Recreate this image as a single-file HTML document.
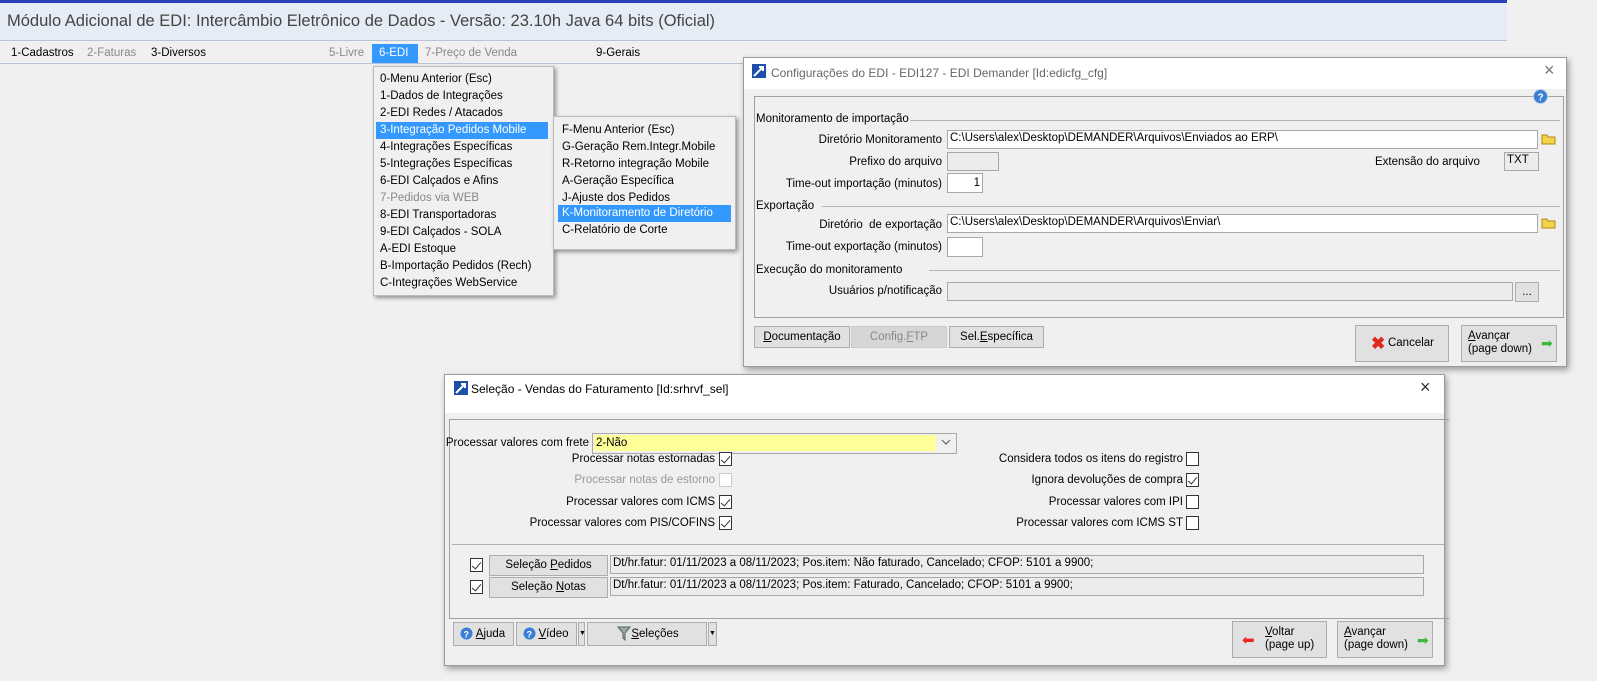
<!DOCTYPE html>
<html><head><meta charset="utf-8"><style>
*{margin:0;padding:0;box-sizing:border-box}
body{width:1597px;height:681px;background:#f0f0f0;font-family:"Liberation Sans",sans-serif;font-size:11.5px;color:#000;position:relative;overflow:hidden}
.a{position:absolute;white-space:nowrap}
.r{text-align:right}
.inp{position:absolute;background:#fff;border:1px solid #a8a8a8;padding:1px 2px;font-size:11.5px;white-space:nowrap}
.btn{position:absolute;background:#e1e1e1;border:1px solid #adadad;text-align:center;font-size:11.5px}
.cb{position:absolute;width:13px;height:14px;background:#fff;border:1px solid #333}
.cb.k::after{content:"";position:absolute;left:3px;top:1px;width:4px;height:8px;border:solid #333;border-width:0 1px 1px 0;transform:rotate(40deg)}
.mi{position:absolute;height:17px;line-height:17px;padding-left:4px;white-space:nowrap}
.hl{background:#3399ff;color:#fff}
.win{position:absolute;background:#f0f0f0;border:1px solid #9a9a9a;box-shadow:2px 3px 6px rgba(0,0,0,.35)}
.tt{position:absolute;left:0;right:0;top:0;background:#fff}
u{text-decoration:underline}
</style></head><body>
<!-- header -->
<div class="a" style="left:0;top:0;width:1507px;height:3px;background:#2a3fb8"></div>
<div class="a" style="left:0;top:3px;width:1507px;height:38px;background:#e6ecf5;border-bottom:1px solid #b8c4d4"></div>
<div class="a" style="left:7px;top:12px;font-size:16.5px;color:#444">Módulo Adicional de EDI: Intercâmbio Eletrônico de Dados - Versão: 23.10h Java 64 bits (Oficial)</div>
<div class="a" style="left:0;top:42px;width:1507px;height:22px;background:#f0f0f0;border-bottom:1px solid #b8c4d4"></div>
<div class="a" style="left:11px;top:47px">1-Cadastros</div>
<div class="a" style="left:87px;top:47px;color:#888">2-Faturas</div>
<div class="a" style="left:151px;top:47px">3-Diversos</div>
<div class="a" style="left:329px;top:47px;color:#888">5-Livre</div>
<div class="a" style="left:372px;top:44px;width:46px;height:19px;background:#3399ff;color:#fff;padding:3px 0 0 7px">6-EDI</div>
<div class="a" style="left:425px;top:47px;color:#888">7-Preço de Venda</div>
<div class="a" style="left:596px;top:47px">9-Gerais</div>

<!-- menu -->
<div class="a" style="left:373px;top:66px;width:181px;height:230px;background:#f0f0f0;border:1px solid #bbb;box-shadow:2px 2px 4px rgba(0,0,0,.4)"></div>
<div class="mi" style="left:376px;top:71px">0-Menu Anterior (Esc)</div>
<div class="mi" style="left:376px;top:88px">1-Dados de Integrações</div>
<div class="mi" style="left:376px;top:105px">2-EDI Redes / Atacados</div>
<div class="mi hl" style="left:376px;top:122px;width:172px">3-Integração Pedidos Mobile</div>
<div class="mi" style="left:376px;top:139px">4-Integrações Específicas</div>
<div class="mi" style="left:376px;top:156px">5-Integrações Específicas</div>
<div class="mi" style="left:376px;top:173px">6-EDI Calçados e Afins</div>
<div class="mi" style="left:376px;top:190px;color:#888">7-Pedidos via WEB</div>
<div class="mi" style="left:376px;top:207px">8-EDI Transportadoras</div>
<div class="mi" style="left:376px;top:224px">9-EDI Calçados - SOLA</div>
<div class="mi" style="left:376px;top:241px">A-EDI Estoque</div>
<div class="mi" style="left:376px;top:258px">B-Importação Pedidos (Rech)</div>
<div class="mi" style="left:376px;top:275px">C-Integrações WebService</div>

<div class="a" style="left:553px;top:116px;width:183px;height:134px;background:#f0f0f0;border:1px solid #bbb;box-shadow:2px 2px 4px rgba(0,0,0,.4)"></div>
<div class="mi" style="left:558px;top:122px">F-Menu Anterior (Esc)</div>
<div class="mi" style="left:558px;top:139px">G-Geração Rem.Integr.Mobile</div>
<div class="mi" style="left:558px;top:156px">R-Retorno integração Mobile</div>
<div class="mi" style="left:558px;top:173px">A-Geração Específica</div>
<div class="mi" style="left:558px;top:190px">J-Ajuste dos Pedidos</div>
<div class="mi hl" style="left:558px;top:205px;width:173px">K-Monitoramento de Diretório</div>
<div class="mi" style="left:558px;top:222px">C-Relatório de Corte</div>

<!-- config window -->
<div class="win" style="left:743px;top:57px;width:824px;height:310px">
 <div class="tt" style="height:31px"></div>
</div>
<svg class="a" style="left:752px;top:64px" width="14" height="14"><rect width="14" height="14" fill="#1c4fa8"/><path d="M2 12 L11 3 M7 3 H11 V7" stroke="#fff" stroke-width="2" fill="none"/></svg>
<div class="a" style="left:771px;top:66px;font-size:12px;color:#666">Configurações do EDI - EDI127 - EDI Demander [Id:edicfg_cfg]</div>
<div class="a" style="left:1544px;top:60px;font-size:18px;color:#777">×</div>
<div class="a" style="left:754px;top:96px;width:810px;height:222px;border:1px solid #a0a0a0"></div>
<svg class="a" style="left:1533px;top:89px" width="15" height="15"><circle cx="7.5" cy="7.5" r="7" fill="#3a7fd5" stroke="#bcd" /><text x="4.5" y="11.5" font-size="10" fill="#fff" font-family="Liberation Sans" font-weight="bold">?</text></svg>
<div class="a" style="left:756px;top:113px">Monitoramento de importação</div>
<div class="a" style="left:910px;top:120px;width:650px;height:1px;background:#b5b5b5"></div>
<div class="a r" style="left:760px;top:134px;width:182px">Diretório Monitoramento</div>
<div class="inp" style="left:947px;top:130px;width:591px;height:19px">C:\Users\alex\Desktop\DEMANDER\Arquivos\Enviados ao ERP\</div>
<svg class="a" style="left:1541px;top:132px" width="15" height="13"><path d="M1 3h5l1 2h7v7H1z" fill="#f2d34a" stroke="#b08a10"/></svg>
<div class="a r" style="left:760px;top:156px;width:182px">Prefixo do arquivo</div>
<div class="inp" style="left:947px;top:152px;width:52px;height:19px;background:#ececec"></div>
<div class="a" style="left:1375px;top:156px">Extensão do arquivo</div>
<div class="inp" style="left:1504px;top:152px;width:35px;height:19px;background:#ececec">TXT</div>
<div class="a r" style="left:760px;top:178px;width:182px">Time-out importação (minutos)</div>
<div class="inp r" style="left:947px;top:173px;width:36px;height:20px;padding-top:3px">1</div>
<div class="a" style="left:756px;top:200px">Exportação</div>
<div class="a" style="left:822px;top:206px;width:738px;height:1px;background:#b5b5b5"></div>
<div class="a r" style="left:760px;top:219px;width:182px">Diretório&nbsp; de exportação</div>
<div class="inp" style="left:947px;top:214px;width:591px;height:19px">C:\Users\alex\Desktop\DEMANDER\Arquivos\Enviar\</div>
<svg class="a" style="left:1541px;top:216px" width="15" height="13"><path d="M1 3h5l1 2h7v7H1z" fill="#f2d34a" stroke="#b08a10"/></svg>
<div class="a r" style="left:760px;top:241px;width:182px">Time-out exportação (minutos)</div>
<div class="inp" style="left:947px;top:237px;width:36px;height:20px"></div>
<div class="a" style="left:756px;top:264px">Execução do monitoramento</div>
<div class="a" style="left:929px;top:270px;width:631px;height:1px;background:#b5b5b5"></div>
<div class="a r" style="left:760px;top:285px;width:182px">Usuários p/notificação</div>
<div class="inp" style="left:947px;top:282px;width:566px;height:19px;background:#ececec"></div>
<div class="btn" style="left:1515px;top:282px;width:24px;height:20px;line-height:18px">...</div>
<div class="btn" style="left:754px;top:326px;width:96px;height:22px;line-height:20px"><u>D</u>ocumentação</div>
<div class="btn" style="left:851px;top:326px;width:96px;height:22px;line-height:20px;background:#d6d6d6;border-color:#ccc;color:#888">Config.<u>F</u>TP</div>
<div class="btn" style="left:949px;top:326px;width:95px;height:22px;line-height:20px">Sel.<u>E</u>specífica</div>
<div class="btn" style="left:1355px;top:325px;width:94px;height:37px;line-height:35px;padding-left:18px">Cancelar</div>
<div class="a" style="left:1371px;top:334px;color:#e0281c;font-size:17px;font-weight:bold">✖</div>
<div class="btn" style="left:1461px;top:325px;width:96px;height:37px;text-align:left;padding:4px 0 0 6px;line-height:13px"><u>A</u>vançar<br>(page down)</div>
<div class="a" style="left:1541px;top:335px;color:#3cb83c;font-size:14px">➡</div>

<!-- selecao window -->
<div class="win" style="left:444px;top:374px;width:1001px;height:292px">
 <div class="tt" style="height:38px"></div>
</div>
<svg class="a" style="left:454px;top:381px" width="14" height="14"><rect width="14" height="14" fill="#1c4fa8"/><path d="M2 12 L11 3 M7 3 H11 V7" stroke="#fff" stroke-width="2" fill="none"/></svg>
<div class="a" style="left:471px;top:382px;font-size:12px">Seleção - Vendas do Faturamento [Id:srhrvf_sel]</div>
<div class="a" style="left:1420px;top:377px;font-size:18px;color:#333">×</div>
<div class="a" style="left:449px;top:419px;width:1000px;height:200px;border-top:1px solid #a0a0a0;border-left:1px solid #a0a0a0;border-bottom:1px solid #a0a0a0"></div>
<div class="a r" style="left:300px;top:437px;width:289px">Processar valores com frete</div>
<div class="a" style="left:592px;top:433px;width:365px;height:21px;background:#f0f0f0;border:1px solid #a8a8a8"></div>
<div class="a" style="left:594px;top:435px;width:342px;height:16px;background:#ffff99;padding-left:2px;line-height:16px">2-Não</div>
<svg class="a" style="left:941px;top:438px" width="10" height="8"><path d="M1 2 L5 6 L9 2" stroke="#555" fill="none"/></svg>
<div class="a r" style="left:450px;top:453px;width:265px">Processar notas estornadas</div>
<div class="cb k" style="left:719px;top:452px"></div>
<div class="a r" style="left:450px;top:474px;width:265px;color:#999">Processar notas de estorno</div>
<div class="cb" style="left:719px;top:473px;border-color:#ccc"></div>
<div class="a r" style="left:450px;top:496px;width:265px">Processar valores com ICMS</div>
<div class="cb k" style="left:719px;top:495px"></div>
<div class="a r" style="left:450px;top:517px;width:265px">Processar valores com PIS/COFINS</div>
<div class="cb k" style="left:719px;top:516px"></div>
<div class="a r" style="left:900px;top:453px;width:283px">Considera todos os itens do registro</div>
<div class="cb" style="left:1186px;top:452px"></div>
<div class="a r" style="left:900px;top:474px;width:283px">Ignora devoluções de compra</div>
<div class="cb k" style="left:1186px;top:473px"></div>
<div class="a r" style="left:900px;top:496px;width:283px">Processar valores com IPI</div>
<div class="cb" style="left:1186px;top:495px"></div>
<div class="a r" style="left:900px;top:517px;width:283px">Processar valores com ICMS ST</div>
<div class="cb" style="left:1186px;top:516px"></div>
<div class="a" style="left:452px;top:544px;width:992px;height:1px;background:#b0b0b0"></div>
<div class="cb k" style="left:470px;top:558px"></div>
<div class="btn" style="left:489px;top:555px;width:119px;height:21px;line-height:19px">Seleção <u>P</u>edidos</div>
<div class="inp" style="left:610px;top:555px;width:814px;height:19px;background:#ececec">Dt/hr.fatur: 01/11/2023 a 08/11/2023; Pos.item: Não faturado, Cancelado; CFOP: 5101 a 9900;</div>
<div class="cb k" style="left:470px;top:580px"></div>
<div class="btn" style="left:489px;top:577px;width:119px;height:21px;line-height:19px">Seleção <u>N</u>otas</div>
<div class="inp" style="left:610px;top:577px;width:814px;height:19px;background:#ececec">Dt/hr.fatur: 01/11/2023 a 08/11/2023; Pos.item: Faturado, Cancelado; CFOP: 5101 a 9900;</div>
<div class="btn" style="left:453px;top:622px;width:61px;height:24px;line-height:22px;padding-left:14px"><u>A</u>juda</div>
<div class="btn" style="left:516px;top:622px;width:61px;height:24px;line-height:22px;padding-left:14px"><u>V</u>ídeo</div>
<div class="btn" style="left:578px;top:622px;width:7px;height:24px;font-size:7px;line-height:22px">▼</div>
<div class="btn" style="left:587px;top:622px;width:120px;height:24px;line-height:22px;padding-left:16px"><u>S</u>eleções</div>
<div class="btn" style="left:708px;top:622px;width:9px;height:24px;font-size:7px;line-height:22px">▼</div>
<svg class="a" style="left:460px;top:627px" width="13" height="13"><circle cx="6.5" cy="6.5" r="6" fill="#3a7fd5"/><text x="3.5" y="10.5" font-size="9" fill="#fff" font-weight="bold" font-family="Liberation Sans">?</text></svg>
<svg class="a" style="left:523px;top:627px" width="13" height="13"><circle cx="6.5" cy="6.5" r="6" fill="#3a7fd5"/><text x="3.5" y="10.5" font-size="9" fill="#fff" font-weight="bold" font-family="Liberation Sans">?</text></svg>
<svg class="a" style="left:617px;top:625px" width="14" height="16"><path d="M1 2h12l-5 6v7l-2-2V8z" fill="#9aa" stroke="#566"/></svg>
<div class="btn" style="left:1232px;top:621px;width:95px;height:37px;text-align:left;padding:4px 0 0 32px;line-height:13px"><u>V</u>oltar<br>(page up)</div>
<div class="a" style="left:1242px;top:631px;color:#e22;font-size:15px">⬅</div>
<div class="btn" style="left:1337px;top:621px;width:96px;height:37px;text-align:left;padding:4px 0 0 6px;line-height:13px"><u>A</u>vançar<br>(page down)</div>
<div class="a" style="left:1417px;top:632px;color:#3cb83c;font-size:14px">➡</div>
</body></html>
